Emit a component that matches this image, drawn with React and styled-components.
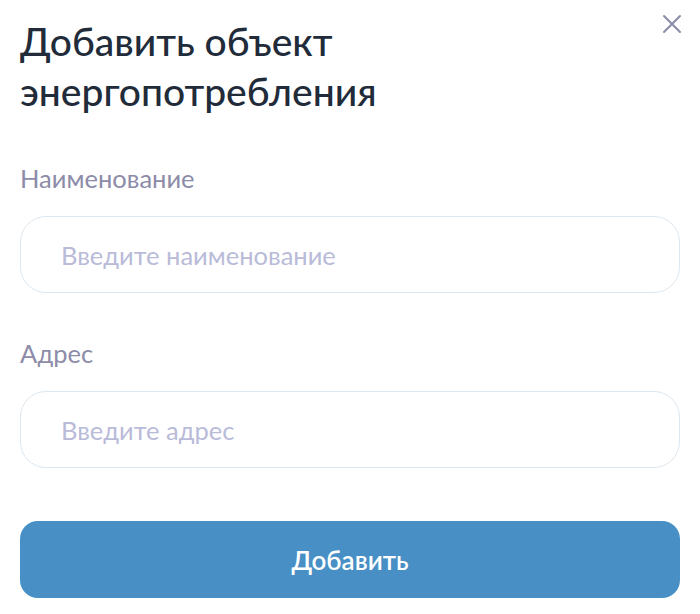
import React from 'react';
import styled, {createGlobalStyle} from 'styled-components';

const GlobalStyle = createGlobalStyle`
  body {
    margin: 0;
    background: #ffffff;
    font-family: Lato, "Noto Sans", sans-serif;
  }
`;

const Modal = styled.div`
  position: relative;
  box-sizing: border-box;
  width: 700px;
  height: 614px;
  padding: 16px 20px 0 20px;
  background: #ffffff;
`;

const CloseButton = styled.button`
  position: absolute;
  top: 12px;
  right: 16px;
  width: 24px;
  height: 24px;
  padding: 0;
  border: none;
  background: none;
  display: flex;
  align-items: center;
  justify-content: center;
  cursor: pointer;
`;

const Title = styled.h1`
  margin: 0 0 47px 0;
  font-size: 39px;
  line-height: 50px;
  font-weight: 500;
  color: #212b3a;
  max-width: 520px;
`;

const Field = styled.div`
  display: flex;
  flex-direction: column;
  gap: 23px;
  margin-bottom: ${props => props.last ? '53px' : '45px'};
`;

const Label = styled.label`
  font-size: 25.5px;
  line-height: 30px;
  color: #8c8ca8;
`;

const Input = styled.input`
  box-sizing: border-box;
  width: 100%;
  height: 77px;
  padding: 0 40px;
  border: 1px solid #dde7ef;
  border-radius: 26px;
  font-family: Lato, "Noto Sans", sans-serif;
  font-size: 25.5px;
  color: #212b3a;
  outline: none;
  &::placeholder {
    color: #b9bbd9;
  }
`;

const SubmitButton = styled.button`
  width: 100%;
  height: 77px;
  border: none;
  border-radius: 18px;
  background: #478fc4;
  color: #ffffff;
  font-family: Lato, "Noto Sans", sans-serif;
  font-size: 26px;
  font-weight: 600;
  cursor: pointer;
`;

export default function App() {
  return (
    <>
      <GlobalStyle />
      <Modal>
        <CloseButton aria-label="Закрыть">
          <svg width="20" height="20" viewBox="0 0 20 20">
            <path d="M2 2 L18 18 M18 2 L2 18" stroke="#8a8aa9" strokeWidth="2" strokeLinecap="round" />
          </svg>
        </CloseButton>
        <Title>Добавить объект энергопотребления</Title>
        <Field>
          <Label>Наименование</Label>
          <Input placeholder="Введите наименование" />
        </Field>
        <Field last>
          <Label>Адрес</Label>
          <Input placeholder="Введите адрес" />
        </Field>
        <SubmitButton>Добавить</SubmitButton>
      </Modal>
    </>
  );
}
